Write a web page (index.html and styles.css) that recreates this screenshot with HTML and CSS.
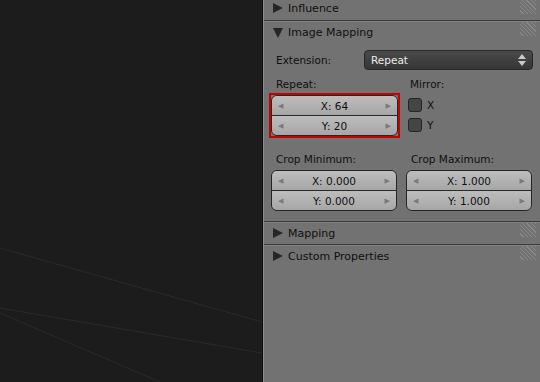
FILE: index.html
```html
<!DOCTYPE html>
<html lang="en">
<head>
    <meta charset="UTF-8">
    <title>Texture properties</title>
    <link rel="stylesheet" href="styles.css">
</head>
<body>
    <div class="app">
        <div class="viewport">
            <svg class="wires" width="262" height="382" viewBox="0 0 262 382">
                <line x1="0" y1="248" x2="262" y2="322" />
                <line x1="0" y1="308" x2="262" y2="353" />
                <line x1="0" y1="313" x2="160" y2="382" />
            </svg>
        </div>

        <div class="panel">
            <div class="hdr first">
                <span class="tri right"></span>Influence
                <span class="grip"></span>
            </div>
            <div class="sep"></div>
            <div class="hdr">
                <span class="tri down"></span>Image Mapping
                <span class="grip"></span>
            </div>

            <div class="body">
                <div class="ext-row">
                    <span class="label">Extension:</span>
                    <div class="menu">
                        <span>Repeat</span>
                        <svg class="updown" width="8" height="12" viewBox="0 0 8 12">
                            <path d="M4 0 L8 5 L0 5 Z" />
                            <path d="M0 7 L8 7 L4 12 Z" />
                        </svg>
                    </div>
                </div>

                <div class="two-col">
                    <div class="col">
                        <div class="label">Repeat:</div>
                        <div class="highlight">
                            <div class="fields">
                                <div class="num"><span class="arr">&#9664;</span>X: 64<span class="arr">&#9654;</span></div>
                                <div class="num"><span class="arr">&#9664;</span>Y: 20<span class="arr">&#9654;</span></div>
                            </div>
                        </div>
                    </div>
                    <div class="col mirror">
                        <div class="label">Mirror:</div>
                        <div class="check"><span class="box"></span>X</div>
                        <div class="check"><span class="box"></span>Y</div>
                    </div>
                </div>

                <div class="two-col crop">
                    <div class="col">
                        <div class="label">Crop Minimum:</div>
                        <div class="fields">
                            <div class="num"><span class="arr">&#9664;</span>X: 0.000<span class="arr">&#9654;</span></div>
                            <div class="num"><span class="arr">&#9664;</span>Y: 0.000<span class="arr">&#9654;</span></div>
                        </div>
                    </div>
                    <div class="col">
                        <div class="label">Crop Maximum:</div>
                        <div class="fields">
                            <div class="num"><span class="arr">&#9664;</span>X: 1.000<span class="arr">&#9654;</span></div>
                            <div class="num"><span class="arr">&#9664;</span>Y: 1.000<span class="arr">&#9654;</span></div>
                        </div>
                    </div>
                </div>
            </div>

            <div class="sep"></div>
            <div class="hdr">
                <span class="tri right"></span>Mapping
                <span class="grip"></span>
            </div>
            <div class="sep"></div>
            <div class="hdr">
                <span class="tri right"></span>Custom Properties
                <span class="grip"></span>
            </div>
        </div>
    </div>
</body>
</html>
```

FILE: styles.css
```css
body {
    margin: 0;
    padding: 0;
    font-family: "DejaVu Sans", sans-serif;
    font-size: 10.5px;
    color: #101010;
    overflow: hidden;
}

.app {
    display: flex;
    width: 540px;
    height: 382px;
}

.viewport {
    position: relative;
    width: 262px;
    background: #1c1c1c;
    border-right: 1px solid #0e0e0e;
}

.wires {
    position: absolute;
    left: 0;
    top: 0;
}

.wires line {
    stroke: #2a2a2a;
    stroke-width: 1;
}

.panel {
    flex: 1;
    background: #727272;
    border-left: 1px solid #8c8c8c;
}

.hdr {
    position: relative;
    height: 21px;
    line-height: 21px;
    padding-left: 24px;
    font-size: 11px;
    color: #101010;
}

.hdr.first {
    height: 20px;
    line-height: 17px;
}

.tri {
    position: absolute;
    left: 9px;
    width: 0;
    height: 0;
}

.tri.right {
    top: 5px;
    border-top: 5px solid transparent;
    border-bottom: 5px solid transparent;
    border-left: 10px solid #262626;
}

.hdr.first .tri.right {
    top: 3px;
}

.tri.down {
    top: 6px;
    border-left: 5px solid transparent;
    border-right: 5px solid transparent;
    border-top: 10px solid #262626;
}

.grip {
    position: absolute;
    right: 4px;
    top: 0;
    width: 16px;
    height: 14px;
    background: repeating-linear-gradient(45deg, transparent 0, transparent 2px, #8e8e8e 2px, #8e8e8e 3px);
    opacity: 0.8;
}

.sep {
    height: 1px;
    background: #3c3c3c;
    border-bottom: 1px solid #808080;
}

.body {
    padding: 7px 7px 10px 7px;
}

.label {
    color: #101010;
}

.ext-row {
    display: flex;
    align-items: center;
    height: 20px;
    padding-left: 5px;
}

.ext-row .label {
    width: 88px;
}

.menu {
    flex: 1;
    display: flex;
    align-items: center;
    justify-content: space-between;
    height: 18px;
    padding: 0 6px;
    border: 1px solid #272727;
    border-radius: 4px;
    background: linear-gradient(#4a4a4a, #353535);
    color: #ececec;
}

.updown path {
    fill: #c8c8c8;
}

.two-col {
    display: grid;
    grid-template-columns: 127px 1fr;
    gap: 10px;
    margin-top: 7px;
}

.two-col .label {
    height: 14px;
    line-height: 14px;
    padding-left: 5px;
    margin-bottom: 4px;
}

.highlight {
    margin: -2px;
    border: 2px solid #c80000;
}

.fields {
    border: 1px solid #262626;
    border-radius: 6px;
    overflow: hidden;
}

.num {
    display: flex;
    justify-content: space-between;
    align-items: center;
    height: 19px;
    padding: 0 6px;
    background: linear-gradient(#bdbdbd, #a6a6a6);
    color: #101010;
}

.num + .num {
    border-top: 1px solid #2a2a2a;
}

.arr {
    font-size: 7px;
    color: #7a7a7a;
}

.mirror .label {
    padding-left: 2px;
}

.check {
    display: flex;
    align-items: center;
    gap: 5px;
    height: 20px;
    padding-left: 0;
}

.box {
    width: 12px;
    height: 12px;
    border: 1px solid #262626;
    border-radius: 3px;
    background: #454545;
}

.crop {
    margin-top: 16px;
    grid-template-columns: 126px 126px;
    gap: 9px;
}
```
